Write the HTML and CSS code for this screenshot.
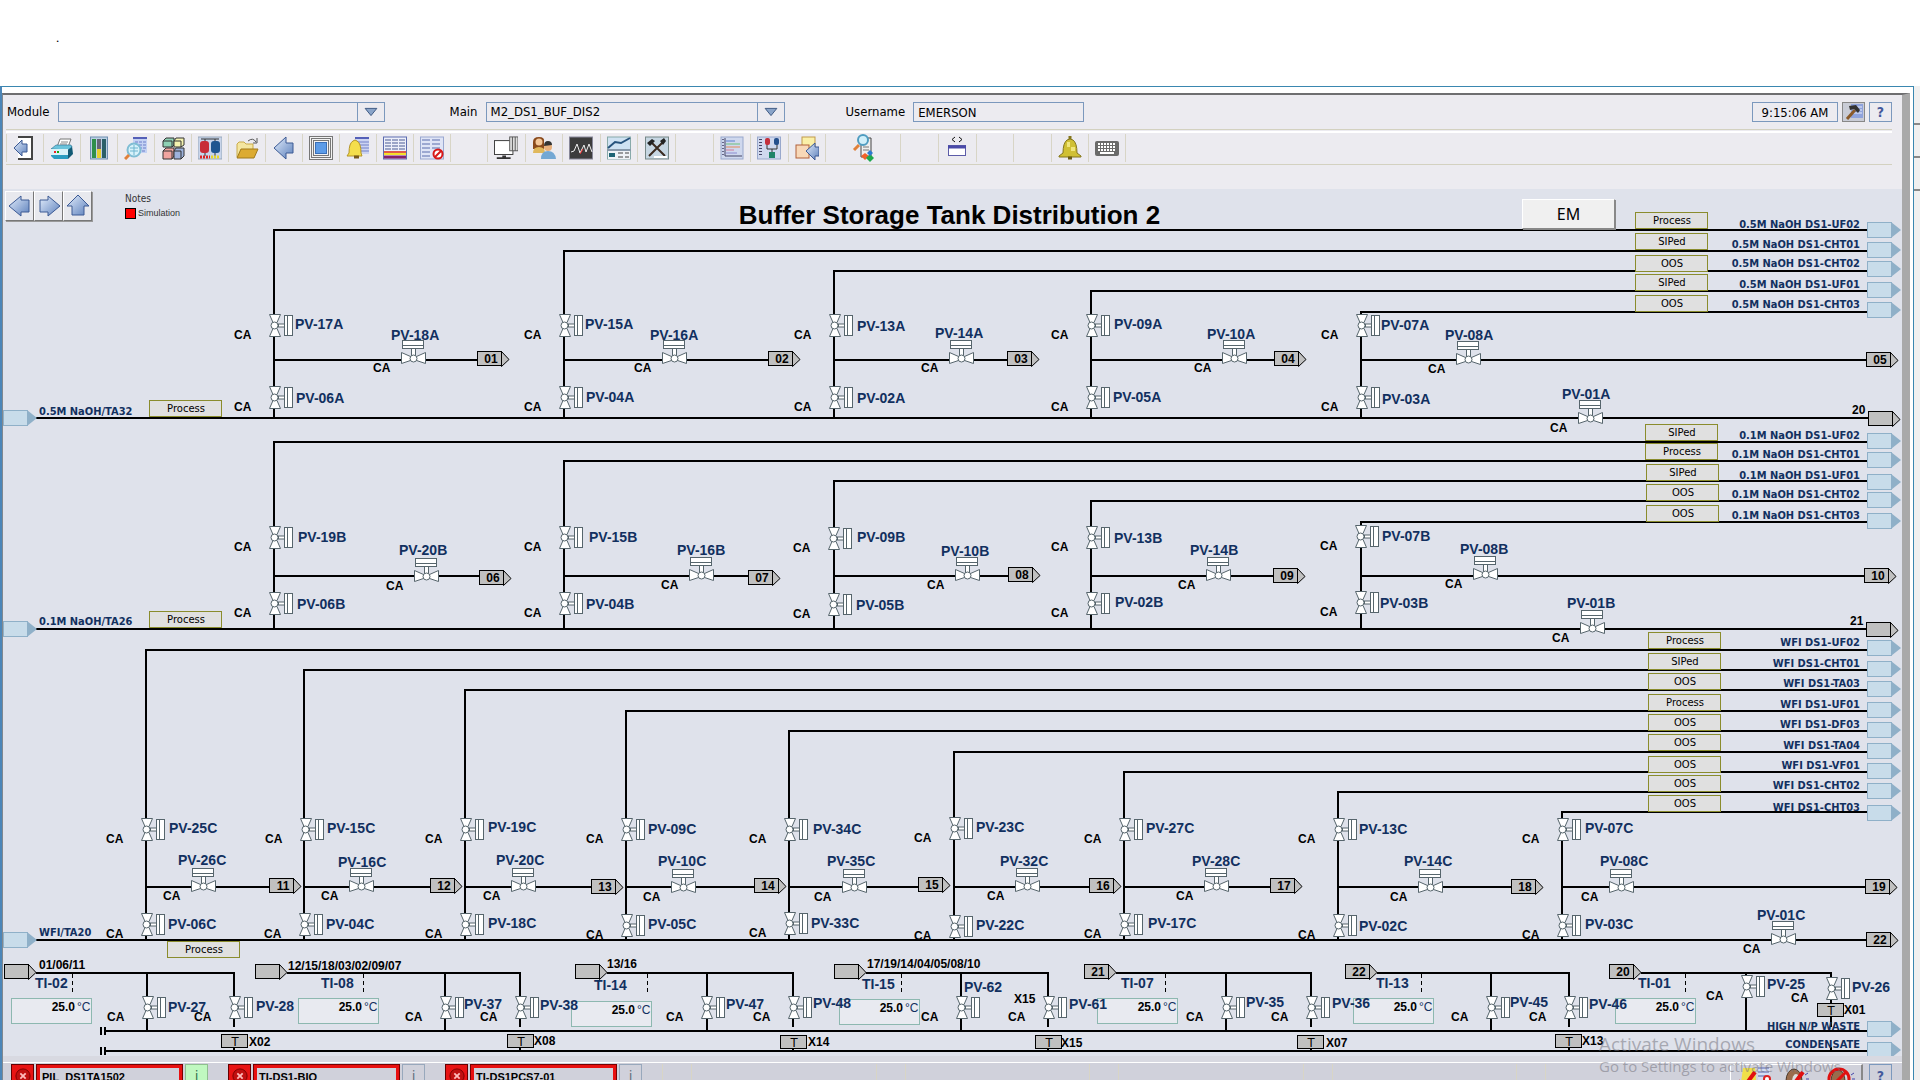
FILE: index.html
```html
<!DOCTYPE html>
<html lang="en">
<head>
<meta charset="utf-8">
<title>Buffer Storage Tank Distribution 2</title>
<link rel="stylesheet" href="styles.css">
</head>
<body>
<div class="blank">.</div>
<div class="desk">
<div class="window">
<div class="frame">
  <header class="topbar">
    <div class="field">
      <label for="module">Module</label>
      <span class="combo combo-module"><select id="module"><option></option></select><svg class="combo-arrow" viewBox="0 0 27 20"><path class="tri" d="M7 6h13l-6.500 8z"/></svg></span>
    </div>
    <div class="field">
      <label class="main-label" for="main">Main</label>
      <span class="combo combo-main"><select id="main"><option>M2_DS1_BUF_DIS2</option></select><svg class="combo-arrow" viewBox="0 0 27 20"><path class="tri" d="M7 6h13l-6.500 8z"/></svg></span>
    </div>
    <div class="field">
      <label for="user">Username</label>
      <input id="user" class="user" type="text" value="EMERSON">
    </div>
    <div class="status">
      <time class="clock">9:15:06 AM</time>
      <button class="mini raised" aria-label="Configure"><svg viewBox="0 0 20 18"><rect x="7" y="1" width="12" height="14" fill="#8fa3dc"/><path d="M9 4h9M9 7h9M9 10h9" stroke="#e8ecfa"/><path d="M3 16 11 7" stroke="#8a5a2a" stroke-width="3"/><path d="M5 3l7-1 4 5-2 3-4-4-4 1z" fill="#333"/></svg></button>
      <button class="mini help">?</button>
    </div>
  </header>

  <nav class="toolbar" aria-label="Tools">
    <div class="tools">
      <button aria-label="Exit"><svg viewBox="0 0 24 24"><path d="M5 1h14v22H5" fill="#fff"/><path d="M5 1h14v22H5" fill="none" stroke="#444" stroke-width="2"/><path d="M1 12 9 4v4h5v8H9v4z" fill="url(#blue)" stroke="#3c5a94"/></svg></button>
      <button aria-label="Print"><svg viewBox="0 0 24 24"><path d="M7 11 10 3h11l-3 8z" fill="#fff" stroke="#777"/><path d="M11 6h7M10 8h7" stroke="#888"/><path d="M18 12l4-2 1 8-5 5z" fill="#125a74"/><path d="M1 13l5-4h15l1 2-4 3z" fill="#6cc4dc" stroke="#145a80" stroke-width=".5"/><path d="M1 13h17v10H4l-3-3z" fill="#2a9cc0"/><path d="M1 13h17v6H1z" fill="#d8f2f8"/><path d="M4 16h2" stroke="#e22" stroke-width="2"/><path d="M7 16h2" stroke="#1a1" stroke-width="2"/></svg></button>
      <button aria-label="Faceplate"><svg viewBox="0 0 24 24"><rect x="3.500" y="1" width="17" height="22" fill="#bcd0e4" stroke="#6f8fb0"/><rect x="5" y="3" width="4" height="19" fill="#2f8f4a"/><rect x="10" y="3" width="4" height="10" fill="#667"/><rect x="10" y="13" width="4" height="9" fill="#e6cf2e"/><rect x="15" y="3" width="4" height="19" fill="#2b5f68"/></svg></button>
      <button aria-label="Detail"><svg viewBox="0 0 24 24"><rect x="9" y="1" width="14" height="16" fill="#c4d2f4"/><path d="M9 2h14" stroke="#5560b8" stroke-width="2"/><path d="M11 6h11M11 9h11M11 12h11M14 15h8" stroke="#6c7fc8" stroke-dasharray="3 1"/><circle cx="10" cy="14" r="6.500" fill="#d8f2fa" stroke="#7fbdd4" stroke-width="2"/><path d="M10 9v10M6 12h8M6 15h8" stroke="#6fb5cf"/><path d="M5 19l-4 4" stroke="#e0803a" stroke-width="3"/></svg></button>
      <button aria-label="Modules"><svg viewBox="0 0 24 24" stroke="#333"><path d="M2 5l3-3h8v7l-2 2H2z" fill="#8fd0b4"/><path d="M13 5l2-3h8v7l-3 2h-7z" fill="#f4f2b0"/><path d="M2 15l3-3h8v8l-2 3H2z" fill="#f0a4a0"/><path d="M13 15l2-3h8v8l-3 3h-7z" fill="#9db2dc"/><path d="M2 5h9v6M13 5h7v6M2 15h9v8M13 15h7v8" fill="none"/></svg></button>
      <button aria-label="Process"><svg viewBox="0 0 24 24"><rect x="0" y="1" width="24" height="22" fill="#c8d4ea" stroke="#9ab"/><path d="M3 3h18M7 3v17M17 3v17" stroke="#333"/><rect x="2" y="5" width="9" height="12" rx="3" fill="#c82c38"/><rect x="13" y="5" width="9" height="12" rx="3" fill="#1f5590"/><path d="M2 21h10" stroke="#d22" stroke-width="3" stroke-dasharray="2 1"/><path d="M13 21h9" stroke="#e8d82a" stroke-width="3" stroke-dasharray="2 1"/></svg></button>
      <button aria-label="Open"><svg viewBox="0 0 24 24"><path d="M2 21V8l2-2h5l2 2h7v6" fill="#f4e6a0" stroke="#c9aa4a"/><path d="M2 22l4-9h17l-4 9z" fill="#dcab32" stroke="#a07a1c"/><path d="M13 5q5-4 8 1M22 2v5h-4" fill="none" stroke="#555"/></svg></button>
      <button aria-label="Back"><svg viewBox="0 0 24 24"><path d="M2 12 14 1v6h7v10h-7v6z" fill="url(#blue)" stroke="#3c5a94"/></svg></button>
      <button aria-label="Overview"><svg viewBox="0 0 24 24" fill="#f2f2f2" stroke="#777" shape-rendering="crispEdges"><rect x=".5" y=".5" width="23" height="23"/><rect x="2.500" y="2.500" width="19" height="19"/><rect x="4.500" y="4.500" width="15" height="15"/><rect x="6.500" y="6.500" width="11" height="11" fill="#5c9ce8" stroke="#3a70b8"/></svg></button>
      <button aria-label="Alarm list"><svg viewBox="0 0 24 24"><rect x="9" y="1" width="14" height="17" fill="#ccd4f2"/><path d="M9 2h14" stroke="#5560b8" stroke-width="2"/><path d="M11 6h12M11 9h12M11 12h12M11 15h12" stroke="#7280c8"/><path d="M3 17Q3 7 7 5q2-2 4 0 4 2 4 12l1 3H1z" fill="#f4de4c" stroke="#b4952a"/><path d="M8 21h5" stroke="#7a5a1a" stroke-width="3"/></svg></button>
      <button aria-label="Event list"><svg viewBox="0 0 24 24"><rect x=".5" y="1" width="23" height="22" fill="#eef0fa" stroke="#5c6cb0"/><path d="M2 4h20M2 7h20M2 10h20M2 13h20" stroke="#4a5a94" stroke-dasharray="6 1"/><path d="M1 16h22" stroke="#e05a4a" stroke-width="2"/><path d="M1 18h22" stroke="#f4e02a" stroke-width="2"/><path d="M1 21h22" stroke="#84206c" stroke-width="3"/></svg></button>
      <button aria-label="Suppressed alarms"><svg viewBox="0 0 24 24"><rect x=".5" y="1" width="23" height="22" fill="#dfe4f6" stroke="#9aa8d0"/><path d="M2 4h19M2 8h19M2 12h19M2 16h10M2 20h10" stroke="#5a6cac" stroke-dasharray="8 2"/><circle cx="18" cy="18" r="4.500" fill="#fff" stroke="#d81818" stroke-width="2"/><path d="M15 21l6-6" stroke="#d81818" stroke-width="2"/></svg></button>
      <span></span>
      <button aria-label="Display"><svg viewBox="0 0 26 24"><rect x=".5" y="4" width="20" height="15" fill="#fff" stroke="#333"/><path d="M9 20h4v2h5v2H3v-2h6z" fill="#333"/><rect x="17" y="0" width="9" height="15" fill="#ddd" stroke="#555"/><path d="M20 0v15M23 0v15" stroke="#555"/></svg></button>
      <button aria-label="Users"><svg viewBox="0 0 24 24"><path d="M1 13V6q0-5 6-5t5 5v7z" fill="#8a4a1c"/><circle cx="7" cy="6" r="3.500" fill="#f4c89a"/><path d="M1 17q0-6 6-6t6 6z" fill="#e0b85c"/><circle cx="16" cy="11" r="4" fill="#e8b07c"/><path d="M12 10q0-5 4-5t4 4z" fill="#333"/><path d="M9 23q0-8 7-8t8 8z" fill="#74a8d4"/></svg></button>
      <button aria-label="Trend"><svg viewBox="0 0 24 24"><rect x=".5" y="1" width="23" height="22" fill="#3c3c3c" stroke="#889"/><path d="M2 16l3-1 3-7 3 9 4-8 2 7 3-8 3 8" fill="none" stroke="#eee"/><path d="M11 18l3-5" stroke="#e33"/></svg></button>
      <button aria-label="Report"><svg viewBox="0 0 24 24"><rect x=".5" y="1" width="23" height="22" fill="#cfe2f2" stroke="#8aa"/><path d="M1 12l7-6 6 1 9-5" fill="none" stroke="#27537c" stroke-width="2"/><path d="M1 14h22v9H1z" fill="#eef2f6"/><path d="M0 14h24" stroke="#89a" stroke-width="2"/><path d="M2 17h6v4H2z" fill="#1d6474"/><path d="M11 17h5M18 17h4M11 21h5M18 21h4" stroke="#444"/></svg></button>
      <button aria-label="Diagnostics"><svg viewBox="0 0 24 24"><rect x=".5" y="1" width="23" height="22" fill="#c6d6e2" stroke="#788"/><path d="M4 20 18 6M20 20 6 6" stroke="#3a2a20" stroke-width="2"/><path d="M2 7l5-4 3 2-5 5zM15 5l4-3 2 3-3 4z" fill="#222"/><path d="M9 21h13" stroke="#fff" stroke-width="2"/></svg></button>
      <span></span>
      <button aria-label="Batch chart"><svg viewBox="0 0 24 24"><rect x="1" y="1" width="22" height="22" fill="#cfd8ee" stroke="#98a8cc"/><path d="M5 2v18h17" fill="none" stroke="#446"/><path d="M3 3v18" stroke="#668" stroke-dasharray="1 2" stroke-width="2"/><path d="M6 5h9" stroke="#5b7fd0"/><path d="M6 8h14" stroke="#6cbf7c"/><path d="M6 11h14" stroke="#e48a5c"/><path d="M6 14h8" stroke="#d07c9c"/><path d="M6 17h11" stroke="#8c8cd0"/></svg></button>
      <button aria-label="Recipe"><svg viewBox="0 0 24 24"><rect x=".5" y="1" width="23" height="22" fill="#cfd8ee" stroke="#98a8cc"/><path d="M3.500 3v18" stroke="#446" stroke-dasharray="1 2" stroke-width="3"/><path d="M10 8v5h10V8M15 13v5" fill="none" stroke="#333"/><rect x="8" y="2" width="5" height="7" rx="2" fill="#c4303c"/><rect x="17" y="2" width="5" height="7" rx="2" fill="#25508c"/><rect x="12" y="16" width="6" height="6" fill="#1f8468"/></svg></button>
      <button aria-label="Transfer"><svg viewBox="0 0 24 24"><rect x="7" y="1" width="13" height="13" fill="#fbf0a8" stroke="#c09a4a"/><rect x="1" y="9" width="13" height="13" fill="#f8d8b8" stroke="#b0603a"/><path d="M11 15l9-8v4h4v9h-4v4z" fill="url(#blue)" stroke="#3c5a94"/></svg></button>
      <button class="wide" aria-label="Search"><svg viewBox="0 0 24 28"><path d="M10 4h10v19H10z" fill="#eee" stroke="#444"/><path d="M12 13h6M12 16h6" stroke="#777"/><circle cx="12" cy="6" r="5" fill="#d0effa" stroke="#4f9cc0" stroke-width="2"/><path d="M8 11l-5 5" stroke="#e0803a" stroke-width="3"/><path d="M10 22l4-3 4 3-4 4z" fill="#f0622a"/><path d="M15 24l4-4 4 4-4 4z" fill="#1fa84c"/><path d="M16 19l3-3 3 3-3 3z" fill="#2b7ad0"/></svg></button>
      <span></span>
      <button aria-label="View source"><svg viewBox="0 0 24 24"><path d="M10 1 7 3.500 10 6M14 1l3 2.500L14 6" fill="none" stroke="#111"/><rect x="3.500" y="9.500" width="17" height="10" fill="#fff" stroke="#5c5ca8"/><path d="M3 11h18" stroke="#4a4aa8" stroke-width="3"/></svg></button>
      <span></span>
      <span></span>
      <button aria-label="Alarm horn"><svg viewBox="0 0 24 24"><path d="M5 17Q5 7 9 4q3-2 6 0 4 3 4 13l4 3v1H1v-1z" fill="#d0c034" stroke="#84761c"/><path d="M10 22h4" stroke="#6b5c14" stroke-width="3"/><path d="M12 0v3" stroke="#84761c" stroke-width="3"/><path d="M9 6h3v5H9zM13 11h4v4h-4z" fill="#f0e67c"/></svg></button>
      <button aria-label="Keyboard"><svg viewBox="0 0 24 24"><rect x="0" y="5" width="24" height="15" rx="2" fill="#6a6a6a"/><path d="M3 8h18M3 11h18M3 14h18" stroke="#fff" stroke-width="2" stroke-dasharray="2 1"/><path d="M5 17h14" stroke="#fff" stroke-width="2"/></svg></button>
    </div>
  </nav>

  <main class="canvas">
    <svg class="diagram" id="diagram" viewBox="3 189 1899 867" role="img" aria-label="Buffer distribution piping">
      <defs>
        <linearGradient id="blue" x1="0" y1="0" x2="1" y2="1"><stop offset="0" stop-color="#e4eefc"/><stop offset="1" stop-color="#5c80bc"/></linearGradient>
        <g id="valve-v" class="valve">
          <rect x="4" y="-1.500" width="6" height="3"/>
          <path d="M-5-11h11L2.500-3h-4zM-5 11h11L2.500 3h-4z"/>
          <circle r="3.500"/>
          <rect x="10" y="-10" width="8" height="20"/>
          <path d="M13-10v20"/>
        </g>
        <g id="valve-h" class="valve">
          <rect x="-2" y="-10" width="4" height="7"/>
          <path d="M-12-6v11l9-3v-4zM12-6v11L3 2v-4z"/>
          <circle r="3.500"/>
          <rect x="-11" y="-18" width="21" height="8"/>
          <path d="M-11-13h21"/>
        </g>
        <g id="tag" class="tag"><path d="M24.500-7.500 32 .5l-7.500 7z"/><rect x=".5" y="-7.500" width="24" height="14"/></g>
        <g id="connector"><path class="tip" d="M24-8l10 8-10 8z"/><rect class="port" x=".5" y="-7.500" width="24" height="15"/></g>
      </defs>
    </svg>
    <div class="canvas-head">
      <div class="head-left">
        <div class="nav">
          <button aria-label="Previous display"><svg viewBox="0 0 24 24"><path d="M1 12 13 2v4h8v12h-8v4z" fill="url(#blue)" stroke="#3c5a94"/></svg></button>
          <button aria-label="Next display"><svg viewBox="0 0 24 24"><path d="M23 12 11 2v4H3v12h8v4z" fill="url(#blue)" stroke="#3c5a94"/></svg></button>
          <button aria-label="Up"><svg viewBox="0 0 24 24"><path d="M12 1l11 11h-5v9H6v-9H1z" fill="url(#blue)" stroke="#3c5a94"/></svg></button>
        </div>
        <div class="notes">Notes<span class="sim">Simulation</span></div>
      </div>
      <h1>Buffer Storage Tank Distribution 2</h1>
      <button class="em">EM</button>
    </div>
  </main>

  <footer class="alarms">
    <div class="alarm"><button class="ack" aria-label="Acknowledge"><svg viewBox="0 0 18 18"><circle cx="9" cy="9" r="8" fill="#c01010" stroke="#700"/><path d="M6 6l6 6M12 6l-6 6" stroke="#fbb" stroke-width="2"/></svg></button><button class="name">PIL_DS1TA1502</button><button class="info active">i</button></div>
    <div class="alarm"><button class="ack" aria-label="Acknowledge"><svg viewBox="0 0 18 18"><circle cx="9" cy="9" r="8" fill="#c01010" stroke="#700"/><path d="M6 6l6 6M12 6l-6 6" stroke="#fbb" stroke-width="2"/></svg></button><button class="name">TI-DS1-BIO</button><button class="info">i</button></div>
    <div class="alarm"><button class="ack" aria-label="Acknowledge"><svg viewBox="0 0 18 18"><circle cx="9" cy="9" r="8" fill="#c01010" stroke="#700"/><path d="M6 6l6 6M12 6l-6 6" stroke="#fbb" stroke-width="2"/></svg></button><button class="name">TI-DS1PCS7-01</button><button class="info">i</button></div>
    <div class="slots"><i></i><i></i><i></i><i></i><i></i></div>
    <div class="actions">
      <button aria-label="Acknowledge all"><svg viewBox="0 0 36 26"><path d="M8 2h12l2 22H5z" fill="#f0e048"/><rect x="23" y="1" width="12" height="15" fill="#d4dcf2"/><path d="M23 2h11M23 6h11M23 10h8" stroke="#5560a8"/><circle cx="32" cy="13" r="3" fill="#fff" stroke="#d22" stroke-width="2"/><path d="M3 15l6 6L20 6" fill="none" stroke="#e01010" stroke-width="4"/></svg></button>
      <button aria-label="Silence"><svg viewBox="0 0 36 26"><ellipse cx="16" cy="15" rx="8" ry="12" fill="#9a6c4c" stroke="#4a3a2a"/><ellipse cx="18" cy="16" rx="4" ry="8" fill="#ddd"/><path d="M7 15l6 7L25 6" fill="none" stroke="#e01010" stroke-width="4"/><path d="M27 9l3-2M28 13h3M27 17l3 2" stroke="#44a"/></svg></button>
      <button aria-label="Disable horn"><svg viewBox="0 0 36 26"><ellipse cx="17" cy="15" rx="7" ry="11" fill="#9a6c4c" stroke="#4a3a2a"/><circle cx="18" cy="13" r="10" fill="none" stroke="#e01010" stroke-width="3"/><path d="M11 20 25 6" stroke="#e01010" stroke-width="3"/><path d="M30 9l3-2M31 13h3M30 17l3 2" stroke="#44a"/></svg></button>
    </div>
    <button class="mini help">?</button>
  </footer>
</div>
</div>
<aside class="edge"><i></i><i></i><i></i></aside>
</div>
<div class="watermark"><b>Activate Windows</b><span>Go to Settings to activate Windows.</span></div>
<script src="diagram.js"></script>
</body>
</html>
```
FILE: styles.css
```css
* { box-sizing: border-box; }
body {
  margin: 0;
  height: 100vh;
  overflow: hidden;
  display: flex;
  flex-direction: column;
  background: #fff;
  color: #000;
  font: 13px/16px "DejaVu Sans Condensed", "DejaVu Sans", sans-serif;
}
button, input, select { font: inherit; color: inherit; margin: 0; padding: 0; border-radius: 0; }
button { display: flex; align-items: center; justify-content: center; border: 0; background: none; }

.blank { flex: none; height: 86px; padding: 30px 0 0 56px; font-family: "Liberation Serif", serif; }
.desk { flex: 1; min-height: 0; display: flex; }
.window { flex: 1; min-width: 0; overflow: hidden; border: 1px solid #3a87b0; border-left: 2px solid #4c86b8; border-bottom: 0; }
.frame { margin: 6px 3px 0 0; background: #ecebf0; border-top: 2px solid #6e6e70; border-left: 1px solid #808890; border-right: 8px solid #a9a9a9; }
.edge { width: 6px; background: #f0f0f0; display: flex; flex-direction: column; padding-top: 37px; gap: 31px; }
.edge i { height: 2px; background: #888; }

/* Top bar */
.topbar { display: flex; gap: 61px; height: 34px; padding: 7px 10px 0 4px; }
.field { display: flex; gap: 8px; height: 20px; align-items: center; }
.main-label { min-width: 32px; text-align: right; }
.combo { display: grid; width: 327px; }
.combo-main { width: 299px; }
.combo > * { grid-area: 1 / 1; }
.combo select { appearance: none; height: 20px; border: 1px solid #7b98bd; background: transparent; padding-left: 4px; }
.combo-arrow { justify-self: end; width: 28px; height: 20px; border: 1px solid #7b98bd; pointer-events: none; }
.tri { fill: #8aa4c8; stroke: #34507c; }
.user { width: 171px; height: 20px; border: 1px solid #7b98bd; background: transparent; padding-left: 4px; }
.status { margin-left: auto; display: flex; gap: 4px; }
.clock { width: 86px; height: 20px; border: 1px solid #7b98bd; text-align: center; line-height: 19px; }
.mini { width: 23px; height: 20px; border: 1px solid #7b98bd; }
.mini svg { width: 20px; height: 18px; }
.raised { border-color: #888; background: #c9ccd6; }
.help { color: #43599c; font-weight: bold; font-size: 14px; }

/* Toolbar */
.toolbar { height: 60px; padding: 0 10px 0 3px; }
.tools { display: grid; grid-template-columns: repeat(13, 37px) repeat(17, 1fr); height: 36px; padding: 4px 766px 2px 0; border: 1px solid #d3d1c0; border-width: 1px 0; box-shadow: inset 0 1px #ecebf0, inset 0 3px #fff; }
.tools > * { border-left: 1px solid #d8d5c6; }
.tools > :last-child { border-right: 1px solid #d8d5c6; }
.tools svg { width: 24px; height: 24px; }
.tools .wide { grid-column: span 2; }
.tools .wide svg { height: 28px; }

/* Canvas */
.canvas { display: grid; background: #dfe2eb; }
.canvas > * { grid-area: 1 / 1; }
.diagram { display: block; width: 100%; }
.canvas-head { align-self: start; display: grid; grid-template-columns: 1fr auto 1fr; padding: 2px 8px 0 2px; }
.head-left { display: flex; gap: 33px; }
.nav { display: flex; height: 30px; }
.nav button { width: 29px; height: 30px; background: #e8e9ee; border: 1px solid; border-color: #fff #777 #777 #fff; box-shadow: 1px 1px #999; }
.nav svg { width: 24px; height: 24px; }
.notes { display: flex; flex-direction: column; padding-top: 1px; font-size: 10px; line-height: 14px; color: #333; }
.sim { display: flex; align-items: center; gap: 2px; font: 9px/14px "Liberation Sans", sans-serif; }
.sim::before { content: ""; width: 9px; height: 9px; background: #f00; border: 1px solid #000; }
h1 { margin: 10px 0 0; font: bold 26px/28px "Liberation Sans", sans-serif; }
.em { justify-self: end; margin: 8px 279px 0 0; width: 93px; height: 30px; background: #f0f0f0; border: 1px solid; border-color: #fff #888 #888 #fff; box-shadow: 1px 1px #888; font: 16px "Noto Sans", sans-serif; }

/* Diagram */
.pipe { fill: none; stroke: #000; stroke-width: 2; }
.sense { stroke: #000; stroke-dasharray: 4 3; }
.valve { fill: #fff; stroke: #56656c; }
.tag { fill: #c0c0c0; stroke: #000; }
.tip { fill: #8fb0c8; }
.port { fill: #c8dcea; stroke: #8fb0c8; }
.label { font: bold 14px "Liberation Sans", sans-serif; fill: #12305f; }
.ca, .num { font: bold 12px "Liberation Sans", sans-serif; fill: #000; }
.line-name { font: bold 11px "DejaVu Sans Condensed", sans-serif; fill: #12305f; }
.end { text-anchor: end; }
.mid { text-anchor: middle; }
.state { fill: #e0e0e0; stroke: #8a8c2c; }
.state-text { font: 10px "DejaVu Sans", sans-serif; }
.readout { fill: #e8eaf0; stroke: #8db8b0; }
.unit { font: 12px "Liberation Sans", sans-serif; fill: #12305f; }
.trap { fill: #c0c0c0; stroke: #000; }
.trap-text { font: 13px "DejaVu Sans Condensed", sans-serif; }

/* Alarm banner */
.alarms { display: flex; height: 48px; padding: 2px 10px 0 8px; background: #d0d1db; border-top: 6px solid #d8d9e1; box-shadow: inset 0 1px #fff; }
.alarm { display: flex; gap: 2px; width: 197px; margin-right: 20px; }
.ack { width: 23px; height: 24px; background: #e81414; border: 1px solid #600; }
.ack svg { width: 16px; height: 16px; }
.name { flex: 1; height: 32px; align-items: start; justify-content: start; background: #d0d1db; border: 4px solid #e81010; outline: 1px solid #700; outline-offset: -1px; padding: 1px 0 0 2px; font: bold 11px/16px "Liberation Sans", sans-serif; }
.info { width: 23px; height: 24px; border: 1px solid #98a8bc; color: #567; }
.active { background: #c0f8c0; border-color: #8fbf8f; color: #264; }
.slots { flex: 1; display: flex; }
.slots i { flex: 1; display: flex; border-left: 1px solid #d8d5c6; }
.slots i::before { content: ""; width: 28px; border-right: 1px solid #d8d5c6; }
.actions { display: flex; width: 133px; height: 30px; margin-right: 6px; border: 1px solid #fff; border-right: 2px solid #888; }
.actions button { flex: 1; }
.actions svg { width: 36px; height: 26px; }
.alarms .help { height: 24px; }

.watermark { position: absolute; right: 86px; bottom: 4px; display: flex; flex-direction: column; width: 235px; color: rgba(110, 110, 120, .5); font: 15px/20px "Open Sans", sans-serif; white-space: nowrap; pointer-events: none; }
.watermark b { font-size: 19px; line-height: 24px; font-weight: normal; }
```
FILE: diagram.js
```js
const svg = document.getElementById('diagram');
const NS = 'http://www.w3.org/2000/svg';

function add(name, attrs, text) {
  const el = document.createElementNS(NS, name);
  for (const key in attrs) el.setAttribute(key, attrs[key]);
  if (text) el.textContent = text;
  svg.append(el);
}
const pipe = d => add('path', { class: 'pipe', d });
const text = (cls, x, y, s) => add('text', { class: cls, x, y }, s);

// Valves: x, y of the body, then name with its x and baseline.
function valve(kind, [x, y, name, lx, ly]) {
  add('use', { href: '#valve-' + kind, transform: `translate(${x + .5} ${y + .5})` });
  text('ca', x - 40, y + 14, 'CA');
  text('label', lx, ly, name);
}
function tag([x, y, s]) {
  add('use', { href: '#tag', x, y });
  if (s) text('num mid', x + 14, y + 4, s);
}
function destination([lineY, portY, name, nameY, state, stateX, stateY]) {
  add('use', { href: '#connector', x: 1867, y: portY });
  text('line-name end', 1860, nameY, name);
  if (state) status(state, stateX, stateY);
}
function status(s, x, y) {
  add('rect', { class: 'state', x: x + .5, y: y + .5, width: 72, height: 16 });
  text('state-text mid', x + 37, y + 12, s);
}

const sections = [
  {
    main: 418, end: 1868, branch: 360, source: ['0.5M NaOH/TA32', 415, 149, 400],
    columns: [[274, 230, 478], [564, 251, 768], [834, 271, 1007], [1091, 291, 1274], [1361, 312, 1867]],
    dest: [
      [230, 230, '0.5M NaOH DS1-UF02', 228, 'Process', 1635, 212],
      [251, 250, '0.5M NaOH DS1-CHT01', 248, 'SIPed', 1635, 233],
      [271, 269, '0.5M NaOH DS1-CHT02', 267, 'OOS', 1635, 255],
      [291, 290, '0.5M NaOH DS1-UF01', 288, 'SIPed', 1635, 274],
      [312, 310, '0.5M NaOH DS1-CHT03', 308, 'OOS', 1635, 295]
    ],
    v: [
      [274, 325, 'PV-17A', 295, 329], [274, 397, 'PV-06A', 296, 403],
      [564, 325, 'PV-15A', 585, 329], [564, 397, 'PV-04A', 586, 402],
      [834, 325, 'PV-13A', 857, 331], [834, 397, 'PV-02A', 857, 403],
      [1091, 325, 'PV-09A', 1114, 329], [1091, 397, 'PV-05A', 1113, 402],
      [1361, 325, 'PV-07A', 1381, 330], [1361, 397, 'PV-03A', 1382, 404]
    ],
    h: [
      [413, 358, 'PV-18A', 391, 340], [674, 358, 'PV-16A', 650, 340], [961, 358, 'PV-14A', 935, 338],
      [1234, 358, 'PV-10A', 1207, 339], [1468, 359, 'PV-08A', 1445, 340], [1590, 418, 'PV-01A', 1562, 399]
    ],
    tags: [[477, 359, '01'], [768, 359, '02'], [1007, 359, '03'], [1274, 359, '04'], [1866, 360, '05'], [1868, 419]],
    out: ['20', 1852, 414]
  },
  {
    main: 629, end: 1866, branch: 576, source: ['0.1M NaOH/TA26', 625, 149, 611],
    columns: [[274, 442, 479], [564, 461, 748], [834, 481, 1008], [1091, 501, 1273], [1361, 522, 1865]],
    dest: [
      [442, 441, '0.1M NaOH DS1-UF02', 439, 'SIPed', 1645, 424],
      [461, 460, '0.1M NaOH DS1-CHT01', 458, 'Process', 1645, 443],
      [481, 482, '0.1M NaOH DS1-UF01', 479, 'SIPed', 1646, 464],
      [501, 500, '0.1M NaOH DS1-CHT02', 498, 'OOS', 1646, 484],
      [522, 521, '0.1M NaOH DS1-CHT03', 519, 'OOS', 1646, 505]
    ],
    v: [
      [274, 537, 'PV-19B', 298, 542], [274, 603, 'PV-06B', 297, 609],
      [564, 537, 'PV-15B', 589, 542], [564, 603, 'PV-04B', 586, 609],
      [833, 538, 'PV-09B', 857, 542], [833, 604, 'PV-05B', 856, 610],
      [1091, 537, 'PV-13B', 1114, 543], [1091, 603, 'PV-02B', 1115, 607],
      [1360, 536, 'PV-07B', 1382, 541], [1360, 602, 'PV-03B', 1380, 608]
    ],
    h: [
      [426, 576, 'PV-20B', 399, 555], [701, 575, 'PV-16B', 677, 555], [967, 575, 'PV-10B', 941, 556],
      [1218, 575, 'PV-14B', 1190, 555], [1485, 574, 'PV-08B', 1460, 554], [1592, 628, 'PV-01B', 1567, 608]
    ],
    tags: [[479, 578, '06'], [748, 578, '07'], [1008, 575, '08'], [1273, 576, '09'], [1864, 576, '10'], [1866, 630]],
    out: ['21', 1850, 625]
  },
  {
    main: 940, end: 1866, branch: 887, source: ['WFI/TA20', 936, 167, 941],
    columns: [[146, 650, 269], [304, 670, 430], [465, 690, 591], [626, 711, 754], [789, 731, 918], [954, 752, 1089], [1124, 772, 1270], [1338, 792, 1511], [1562, 812, 1865]],
    dest: [
      [650, 648, 'WFI DS1-UF02', 646, 'Process', 1648, 632],
      [670, 669, 'WFI DS1-CHT01', 667, 'SIPed', 1648, 653],
      [690, 689, 'WFI DS1-TA03', 687, 'OOS', 1648, 673],
      [711, 710, 'WFI DS1-UF01', 708, 'Process', 1648, 694],
      [731, 730, 'WFI DS1-DF03', 728, 'OOS', 1648, 714],
      [752, 751, 'WFI DS1-TA04', 749, 'OOS', 1648, 734],
      [772, 771, 'WFI DS1-VF01', 769, 'OOS', 1648, 756],
      [792, 791, 'WFI DS1-CHT02', 789, 'OOS', 1648, 775],
      [812, 813, 'WFI DS1-CHT03', 811, 'OOS', 1648, 795]
    ],
    v: [
      [146, 829, 'PV-25C', 169, 833], [146, 924, 'PV-06C', 168, 929],
      [305, 829, 'PV-15C', 327, 833], [304, 924, 'PV-04C', 326, 929],
      [465, 829, 'PV-19C', 488, 832], [465, 924, 'PV-18C', 488, 928],
      [626, 829, 'PV-09C', 648, 834], [626, 925, 'PV-05C', 648, 929],
      [789, 829, 'PV-34C', 813, 834], [789, 923, 'PV-33C', 811, 928],
      [954, 828, 'PV-23C', 976, 832], [954, 926, 'PV-22C', 976, 930],
      [1124, 829, 'PV-27C', 1146, 833], [1124, 924, 'PV-17C', 1148, 928],
      [1338, 829, 'PV-13C', 1359, 834], [1338, 925, 'PV-02C', 1359, 931],
      [1562, 829, 'PV-07C', 1585, 833], [1562, 925, 'PV-03C', 1585, 929]
    ],
    h: [
      [203, 886, 'PV-26C', 178, 865], [361, 886, 'PV-16C', 338, 867], [523, 886, 'PV-20C', 496, 865],
      [683, 887, 'PV-10C', 658, 866], [854, 887, 'PV-35C', 827, 866], [1027, 886, 'PV-32C', 1000, 866],
      [1216, 886, 'PV-28C', 1192, 866], [1430, 887, 'PV-14C', 1404, 866], [1621, 887, 'PV-08C', 1600, 866],
      [1783, 939, 'PV-01C', 1757, 920]
    ],
    tags: [[269, 886, '11'], [430, 886, '12'], [591, 887, '13'], [754, 886, '14'], [918, 885, '15'], [1089, 886, '16'], [1270, 886, '17'], [1511, 887, '18'], [1865, 887, '19'], [1866, 940, '22']]
  }
];

for (const s of sections) {
  pipe(`M36 ${s.main}H${s.end}`);
  for (const [x, top, end] of s.columns) pipe(`M${x} ${s.main}V${top}H1867M${x} ${s.branch}H${end}`);
  const [name, nameY, boxX, boxY] = s.source;
  add('use', { href: '#connector', x: 3, y: s.main });
  text('line-name', 39, nameY, name);
  status('Process', boxX, boxY);
  s.dest.forEach(destination);
  s.v.forEach(v => valve('v', v));
  s.h.forEach(h => valve('h', h));
  s.tags.forEach(tag);
  if (s.out) text('num', s.out[1], s.out[2], s.out[0]);
}

// Return headers with temperature readouts and steam traps.
pipe('M105 1031H1867M105 1051H1867M101 1027v8M105 1027v8M101 1047v8M105 1047v8');
const returns = [
  { x: 4, lines: '01/06/11', lx: 39, ly: 969, drops: [147, 234], ti: ['TI-02', 35, 988], sense: 72, box: [11, 998], v: [[147, 1007, 'PV-27', 168, 1012], [234, 1007, 'PV-28', 256, 1011]], trap: [221, 1034, 'X02', 249, 1046] },
  { x: 255, lines: '12/15/18/03/02/09/07', lx: 288, ly: 970, drops: [445, 520], ti: ['TI-08', 321, 988], sense: 363, box: [298, 998], v: [[445, 1007, 'PV-37', 464, 1009], [520, 1007, 'PV-38', 540, 1010]], trap: [507, 1034, 'X08', 534, 1045] },
  { x: 575, lines: '13/16', lx: 607, ly: 968, drops: [707, 793], ti: ['TI-14', 594, 990], sense: 647, box: [571, 1001], v: [[706, 1007, 'PV-47', 726, 1009], [793, 1007, 'PV-48', 813, 1008]], trap: [780, 1035, 'X14', 808, 1046] },
  { x: 834, lines: '17/19/14/04/05/08/10', lx: 867, ly: 968, drops: [961, 1048], ti: ['TI-15', 862, 989], sense: 901, box: [839, 999], v: [[961, 1007, 'PV-62', 964, 992], [1048, 1007, 'PV-61', 1069, 1009]], trap: [1035, 1035, 'X15', 1061, 1047] },
  { x: 1084, tag: '21', drops: [1226, 1311], ti: ['TI-07', 1121, 988], sense: 1165, box: [1097, 998], v: [[1226, 1007, 'PV-35', 1246, 1007], [1311, 1007, 'PV-36', 1332, 1008]], trap: [1297, 1035, 'X07', 1326, 1047] },
  { x: 1345, tag: '22', drops: [1491, 1569], ti: ['TI-13', 1376, 988], sense: 1421, box: [1353, 998], v: [[1491, 1007, 'PV-45', 1510, 1007], [1569, 1007, 'PV-46', 1589, 1009]], trap: [1555, 1034, 'X13', 1582, 1045] },
  { x: 1609, tag: '20', drops: [1746, 1831], ti: ['TI-01', 1638, 988], sense: 1685, box: [1615, 998], v: [[1746, 986, 'PV-25', 1767, 989], [1831, 988, 'PV-26', 1852, 992]], trap: [1817, 1003, 'X01', 1844, 1014] }
];
for (const { box: [x, y] } of returns) {
  add('rect', { class: 'readout', x: x + .5, y: y + .5, width: 80, height: 25 });
  text('num end', x + 64, y + 13, '25.0');
  text('unit', x + 66, y + 13, '°C');
}
for (const r of returns) {
  const [a, b] = r.drops;
  const [tx, ty, tname, nx, ny] = r.trap;
  pipe(`M${r.x + 32} 973H${b}V1027M${a} 973V1032M${b} 1047V1051`);
  tag([r.x, 972, r.tag]);
  if (r.lines) text('num', r.lx, r.ly, r.lines);
  add('path', { class: 'sense', d: `M${r.sense + .5} 974v18` });
  text('label', r.ti[1], r.ti[2], r.ti[0]);
  r.v.forEach(v => valve('v', v));
  add('rect', { class: 'trap', x: tx + .5, y: ty + .5, width: 26, height: 13 });
  text('trap-text mid', tx + 14, ty + 12, 'T');
  text('num', nx, ny, tname);
}
text('num', 1014, 1003, 'X15');
destination([1031, 1029, 'HIGH N/P WASTE', 1030]);
destination([1051, 1050, 'CONDENSATE', 1048]);
```
